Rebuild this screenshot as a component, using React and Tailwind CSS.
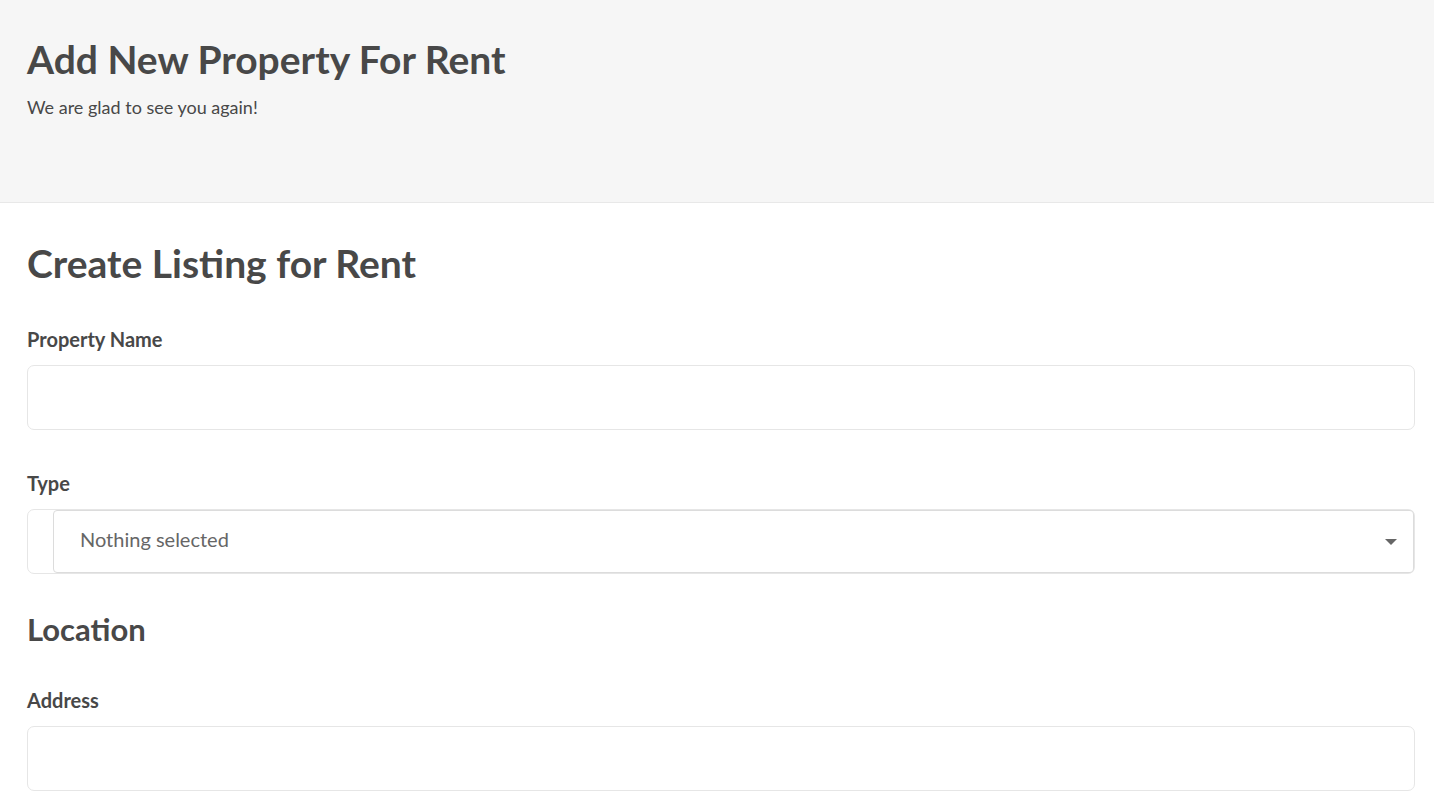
import React from 'react';

const font = { fontFamily: 'Lato, "Open Sans", sans-serif' };

const Label = ({ children }) => (
  <label className="block text-[20px] leading-[24px] font-bold text-[#484848] mb-[14px]">{children}</label>
);

const TextInput = () => (
  <input
    type="text"
    className="block w-full h-[65px] rounded-[7px] border border-[#e6e6e6] bg-white px-5 outline-none"
  />
);

export default function App() {
  return (
    <div className="min-h-screen bg-white text-[#484848]" style={font}>
      <header className="bg-[#f6f6f6] border-b border-[#e8e8e8] h-[203px] px-[27px] pt-[35px]">
        <h1 className="text-[39px] leading-[48px] font-bold">Add New Property For Rent</h1>
        <p className="mt-[12px] text-[18px] leading-[24px]">We are glad to see you again!</p>
      </header>

      <main className="pl-[27px] pr-[19px] pt-[37px]">
        <h2 className="text-[39px] leading-[46px] font-bold">Create Listing for Rent</h2>

        <div className="mt-[41px]">
          <Label>Property Name</Label>
          <TextInput />
        </div>

        <div className="mt-[41px]">
          <Label>Type</Label>
          <div className="flex h-[65px] rounded-[7px] border border-[#e6e6e6] pl-[25px]">
            <button className="flex-1 flex items-center justify-between rounded-[4px] border border-[#dcdcdc] bg-white pl-[26px] pr-[16px] pb-[6px] text-[20px] text-[#666]">
              <span>Nothing selected</span>
              <span className="mt-[6px] w-0 h-0 border-l-[6px] border-r-[6px] border-t-[6px] border-l-transparent border-r-transparent border-t-[#666]" />
            </button>
          </div>
        </div>

        <h3 className="mt-[36px] text-[31px] leading-[38px] font-bold">Location</h3>

        <div className="mt-[40px]">
          <Label>Address</Label>
          <TextInput />
        </div>
      </main>
    </div>
  );
}
